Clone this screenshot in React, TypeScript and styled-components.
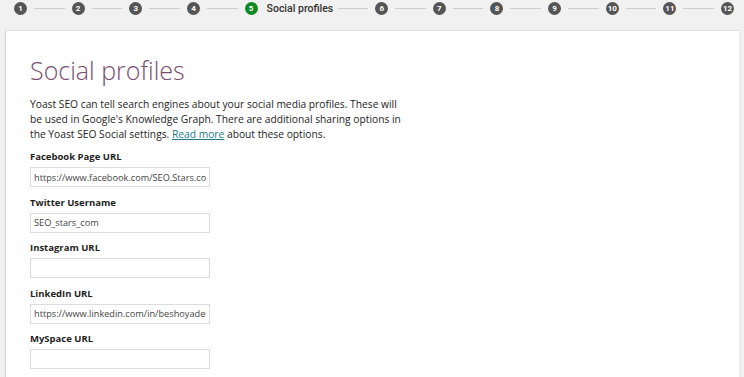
import React from "react";
import styled, { createGlobalStyle } from "styled-components";

const GlobalStyle = createGlobalStyle`
  html, body {
    margin: 0;
    padding: 0;
    background: #f1f1f1;
    font-family: "Open Sans", "Noto Sans", sans-serif;
  }
`;

const Page = styled.div`
  width: 744px;
  height: 377px;
  overflow: hidden;
  background: #f1f1f1;
`;

const StepBar = styled.div`
  display: flex;
  align-items: center;
  height: 17px;
  margin-bottom: 13px;
  padding: 0 10px 0 14px;
  box-sizing: border-box;
`;

const StepCircle = styled.div<{ $active?: boolean }>`
  flex: none;
  width: 13px;
  height: 13px;
  border-radius: 50%;
  background: ${(p) => (p.$active ? "#108a22" : "#555555")};
  color: #ffffff;
  font-family: Roboto, "Liberation Sans", sans-serif;
  font-size: 8px;
  font-weight: 700;
  display: flex;
  align-items: center;
  justify-content: center;
`;

const StepLabel = styled.span`
  flex: none;
  margin-left: 9px;
  width: 64px;
  font-family: Roboto, "Liberation Sans", sans-serif;
  font-size: 10.5px;
  font-weight: 500;
  color: #333333;
  white-space: nowrap;
`;

const Connector = styled.div`
  flex: 1;
  height: 1px;
  margin: 0 7px;
  background: #cccccc;
`;

const Card = styled.div`
  margin-left: 5px;
  margin-right: 4px;
  background: #ffffff;
  border-left: 1px solid #d6d6d6;
  border-top: 1px solid #e2e2e2;
  border-right: 1px solid #eeeeee;
  box-shadow: 0 1px 2px rgba(0, 0, 0, 0.08);
  padding: 22px 24px 20px;
  min-height: 360px;
`;

const Title = styled.h1`
  margin: 0 0 10px;
  font-family: "Open Sans", sans-serif;
  font-weight: 300;
  font-size: 25px;
  line-height: 34px;
  color: #7a4d6f;
`;

const Intro = styled.p`
  margin: 0 0 8px;
  width: 420px;
  font-size: 10.25px;
  line-height: 15px;
  color: #1e1e1e;
  white-space: nowrap;
`;

const MoreLink = styled.a`
  color: #1b7b8c;
  text-decoration: underline;
`;

const Field = styled.div`
  display: flex;
  flex-direction: column;
  margin-bottom: 8.5px;
`;

const Label = styled.label`
  font-size: 9.5px;
  font-weight: 700;
  line-height: 14px;
  color: #1e1e1e;
  margin-bottom: 3px;
`;

const Input = styled.input`
  width: 180px;
  height: 20px;
  box-sizing: border-box;
  border: 1px solid #dcdcdc;
  padding: 0 3px;
  font-family: "Open Sans", sans-serif;
  font-size: 9.2px;
  color: #444444;
  outline: none;
`;

const steps = [1, 2, 3, 4, 5, 6, 7, 8, 9, 10, 11, 12];

const fields = [
  { label: "Facebook Page URL", value: "https://www.facebook.com/SEO.Stars.com" },
  { label: "Twitter Username", value: "SEO_stars_com" },
  { label: "Instagram URL", value: "" },
  { label: "LinkedIn URL", value: "https://www.linkedin.com/in/beshoyadel" },
  { label: "MySpace URL", value: "" },
];

export default function App() {
  return (
    <Page>
      <GlobalStyle />
      <StepBar>
        {steps.map((n, i) => (
          <React.Fragment key={n}>
            <StepCircle $active={n === 5}>{n}</StepCircle>
            {n === 5 && <StepLabel>Social profiles</StepLabel>}
            {i < steps.length - 1 && <Connector />}
          </React.Fragment>
        ))}
      </StepBar>
      <Card>
        <Title>Social profiles</Title>
        <Intro>
          Yoast SEO can tell search engines about your social media profiles. These will
          <br />
          be used in Google's Knowledge Graph. There are additional sharing options in
          <br />
          the Yoast SEO Social settings. <MoreLink href="#">Read more</MoreLink> about
          these options.
        </Intro>
        {fields.map((f) => (
          <Field key={f.label}>
            <Label>{f.label}</Label>
            <Input defaultValue={f.value} readOnly />
          </Field>
        ))}
      </Card>
    </Page>
  );
}
